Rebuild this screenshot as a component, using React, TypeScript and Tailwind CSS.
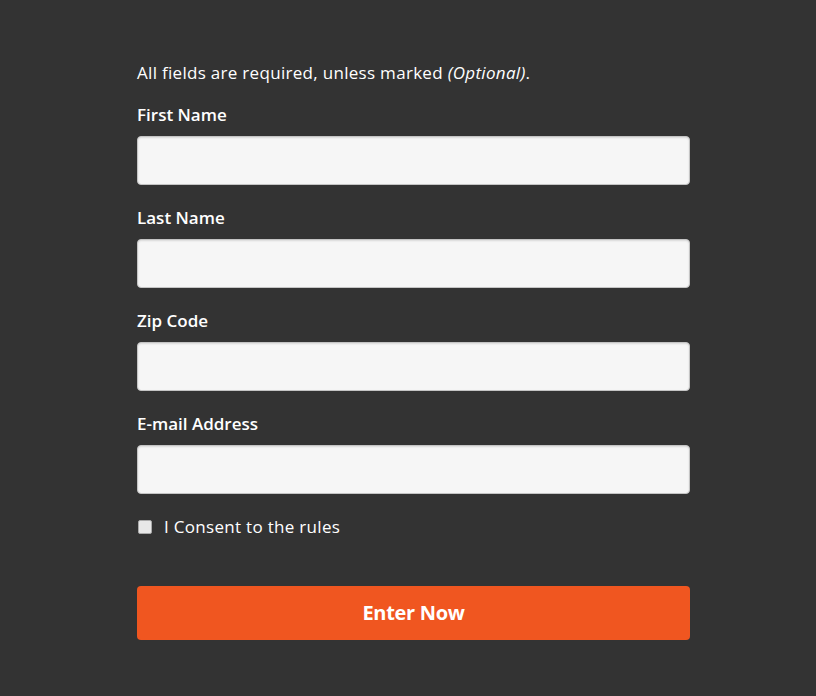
export default function App() {
  const fields = ["First Name", "Last Name", "Zip Code", "E-mail Address"];

  return (
    <div className="min-h-[696px] w-full bg-[#333333] font-['Open_Sans',sans-serif] text-white">
      <form className="ml-[137px] w-[553px] pt-[62px]" onSubmit={(e) => e.preventDefault()}>
        <p className="text-[17px] leading-[22px] tracking-[0.3px]">
          All fields are required, unless marked <em>(Optional)</em>.
        </p>

        <div className="mt-[21px] flex flex-col gap-[23px]">
          {fields.map((label) => (
            <label key={label} className="block">
              <span className="block text-[17px] font-semibold leading-[20px]">
                {label}
              </span>
              <input
                type="text"
                className="mt-[11px] block h-[49px] w-full rounded-[4px] border border-[#c4c4c4] bg-[#f6f6f6] px-3 text-[#333] shadow-[inset_0_1px_2px_rgba(0,0,0,0.12)] outline-none"
              />
            </label>
          ))}
        </div>

        <label className="mt-[23px] flex items-center gap-[12px]">
          <input
            type="checkbox"
            className="ml-[1px] h-[14px] w-[14px] appearance-none rounded-[2px] border border-[#aaa] bg-[#e8e8e8]"
          />
          <span className="text-[17px] leading-[20px] tracking-[0.3px]">I Consent to the rules</span>
        </label>

        <button
          type="submit"
          className="mt-[49px] block h-[54px] w-full rounded-[4px] bg-[#f05620] text-[20px] font-bold tracking-[-0.3px] text-white"
        >
          Enter Now
        </button>
      </form>
    </div>
  );
}
